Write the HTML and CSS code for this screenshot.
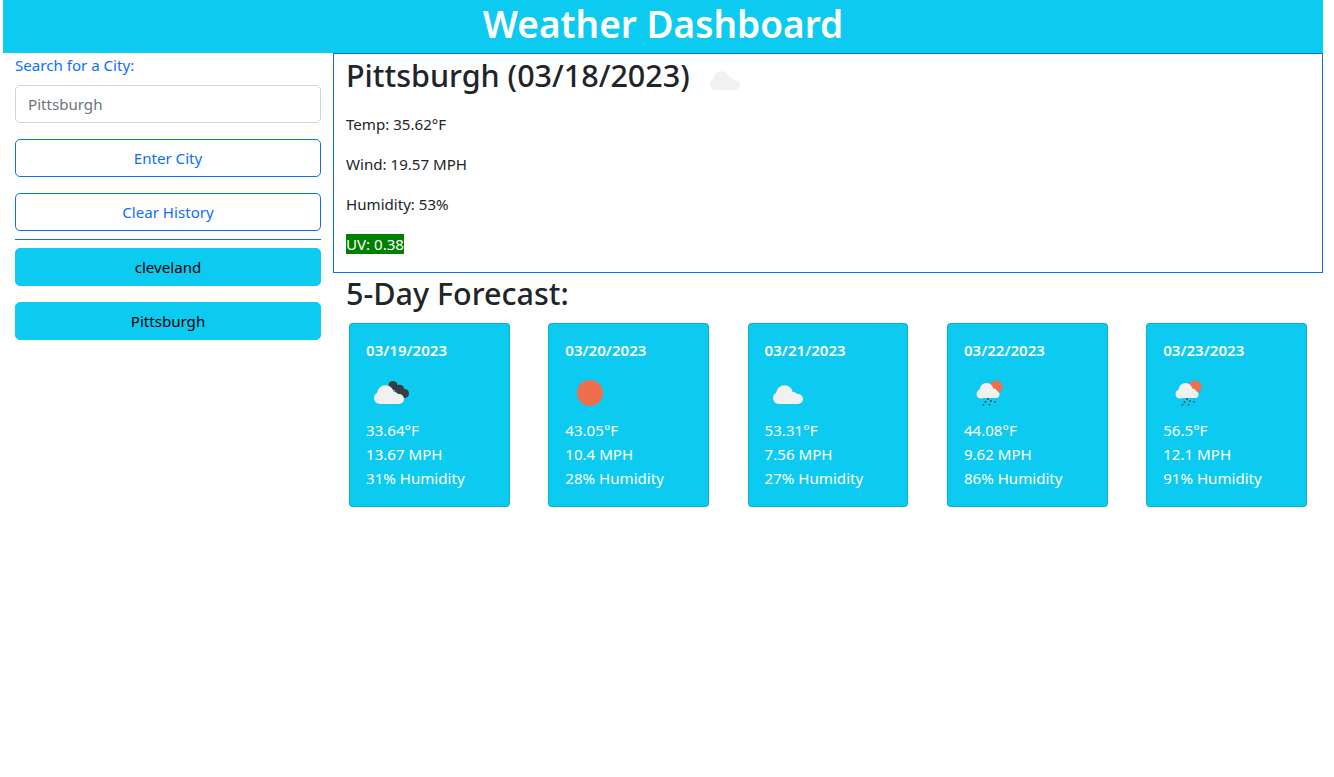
FILE: index.html
```html
<!DOCTYPE html>
<html lang="en">
<head>
  <meta charset="UTF-8">
  <meta name="viewport" content="width=device-width, initial-scale=1.0">
  <title>Weather Dashboard</title>
  <link rel="stylesheet" href="styles.css">
</head>
<body>
  <svg class="icon-defs" width="0" height="0" aria-hidden="true">
    <defs>
      <symbol id="cloud" viewBox="0 0 50 50">
        <circle cx="14" cy="30" r="6"/>
        <circle cx="19.5" cy="25.800" r="8.500"/>
        <circle cx="28" cy="29" r="5"/>
        <circle cx="33" cy="31" r="5"/>
        <rect x="14" y="28" width="19" height="8"/>
      </symbol>
      <symbol id="dark-cloud" viewBox="0 0 50 50">
        <circle cx="27" cy="17.500" r="4.500"/>
        <circle cx="33.500" cy="21.500" r="4.800"/>
        <circle cx="38.500" cy="25.500" r="4.500"/>
      </symbol>
    </defs>
  </svg>

  <div class="container">
    <header class="page-header">
      <h1>Weather Dashboard</h1>
    </header>

    <div class="row">
      <aside class="sidebar">
        <label class="search-label" for="city">Search for a City:</label>
        <input class="search-input" id="city" type="text" placeholder="Pittsburgh">
        <button class="btn btn-outline">Enter City</button>
        <button class="btn btn-outline">Clear History</button>
        <hr class="divider">
        <button class="btn btn-history">cleveland</button>
        <button class="btn btn-history">Pittsburgh</button>
      </aside>

      <main class="content">
        <section class="today">
          <h2 class="today-title">Pittsburgh (03/18/2023) <svg class="wx-icon"><use class="c-light" href="#cloud"/></svg></h2>
          <p>Temp: 35.62°F</p>
          <p>Wind: 19.57 MPH</p>
          <p>Humidity: 53%</p>
          <p><span class="uv-low">UV: 0.38</span></p>
        </section>

        <h2 class="forecast-title">5-Day Forecast:</h2>
        <div class="forecast">
          <div class="card">
            <div class="card-date">03/19/2023</div>
            <svg class="wx-icon" viewBox="0 0 50 50">
              <use class="c-dark" href="#dark-cloud" width="50" height="50"/>
              <use class="c-light" href="#cloud" width="50" height="50"/>
            </svg>
            <div>33.64°F</div>
            <div>13.67 MPH</div>
            <div>31% Humidity</div>
          </div>
          <div class="card">
            <div class="card-date">03/20/2023</div>
            <svg class="wx-icon" viewBox="0 0 50 50">
              <circle class="c-sun" cx="25" cy="25" r="13"/>
            </svg>
            <div>43.05°F</div>
            <div>10.4 MPH</div>
            <div>28% Humidity</div>
          </div>
          <div class="card">
            <div class="card-date">03/21/2023</div>
            <svg class="wx-icon" viewBox="0 0 50 50">
              <use class="c-light" href="#cloud" width="50" height="50"/>
            </svg>
            <div>53.31°F</div>
            <div>7.56 MPH</div>
            <div>27% Humidity</div>
          </div>
          <div class="card">
            <div class="card-date">03/22/2023</div>
            <svg class="wx-icon" viewBox="0 0 50 50">
              <circle class="c-sun" cx="32" cy="19" r="6.500"/>
              <g class="c-light">
                <circle cx="17" cy="26" r="4.500"/>
                <circle cx="22.500" cy="22" r="7"/>
                <circle cx="29.500" cy="24" r="3.500"/>
                <circle cx="32" cy="26.500" r="3.500"/>
                <rect x="17" y="24" width="15" height="6"/>
              </g>
              <path class="c-rain" d="M24 30v2M21.500 33v2M27 32v2M31 33v1.500M19.500 36v1.500M25.500 36v1.500"/>
            </svg>
            <div>44.08°F</div>
            <div>9.62 MPH</div>
            <div>86% Humidity</div>
          </div>
          <div class="card">
            <div class="card-date">03/23/2023</div>
            <svg class="wx-icon" viewBox="0 0 50 50">
              <circle class="c-sun" cx="32" cy="19" r="6.500"/>
              <g class="c-light">
                <circle cx="17" cy="26" r="4.500"/>
                <circle cx="22.500" cy="22" r="7"/>
                <circle cx="29.500" cy="24" r="3.500"/>
                <circle cx="32" cy="26.500" r="3.500"/>
                <rect x="17" y="24" width="15" height="6"/>
              </g>
              <path class="c-rain" d="M24 30v2M21.500 33v2M27 32v2M31 33v1.500M19.500 36v1.500M25.500 36v1.500"/>
            </svg>
            <div>56.5°F</div>
            <div>12.1 MPH</div>
            <div>91% Humidity</div>
          </div>
        </div>
      </main>
    </div>
  </div>
</body>
</html>
```

FILE: styles.css
```css
body {
  font-family: "Noto Sans", Arial, sans-serif;
  font-size: 15.1px;
  line-height: 24px;
  color: #212529;
  background-color: #fff;
  margin: 0;
  padding: 0;
}

.icon-defs {
  position: absolute;
}

.container {
  width: 1320px;
  margin-left: 3px;
}

.page-header {
  background-color: #0dcaf0;
  color: #fff;
  text-align: center;
  height: 53px;
}

.page-header h1 {
  margin: 0;
  font-size: 37px;
  font-weight: 600;
  line-height: 47px;
}

.row {
  display: flex;
}

.sidebar {
  width: 330px;
  box-sizing: border-box;
  padding: 0 12px;
}

.search-label {
  display: block;
  color: #0d6efd;
  margin-bottom: 8px;
}

.search-input {
  display: block;
  width: 100%;
  height: 38px;
  box-sizing: border-box;
  margin-bottom: 16px;
  padding: 6px 12px;
  font: inherit;
  border: 1px solid #ced4da;
  border-radius: 5px;
}

.search-input::placeholder {
  color: #6c757d;
}

.btn {
  display: block;
  width: 100%;
  height: 38px;
  box-sizing: border-box;
  margin-bottom: 16px;
  padding: 6px 12px;
  font: inherit;
  border-radius: 5px;
  cursor: pointer;
}

.btn-outline {
  background-color: #fff;
  color: #0d6efd;
  border: 1px solid #0d6efd;
}

.btn-history {
  background-color: #0dcaf0;
  color: #000;
  border: 1px solid #0dcaf0;
}

.divider {
  border: none;
  border-top: 1px solid #0d6efd;
  margin: -8px 0 8px;
}

.content {
  width: 990px;
}

.today {
  box-sizing: border-box;
  height: 220px;
  border: 1px solid #0d6efd;
  padding: 0 12px;
}

.today-title {
  margin: 0 0 8px;
  height: 50px;
  font-size: 30.5px;
  font-weight: 500;
  line-height: 42px;
  white-space: nowrap;
}

.today p {
  margin: 0 0 16px;
}

.uv-low {
  background-color: green;
  color: #fff;
}

.forecast-title {
  margin: 1px 0 11px 13px;
  font-size: 30.5px;
  font-weight: 500;
  line-height: 38px;
}

.forecast {
  display: flex;
  justify-content: space-between;
  padding: 0 16px;
}

.card {
  width: 160.800px;
  height: 184px;
  box-sizing: border-box;
  padding: 16px;
  background-color: #0dcaf0;
  color: #fff;
  border: 1px solid rgba(0, 0, 0, .125);
  border-radius: 4px;
}

.card-date {
  font-weight: 600;
  line-height: 20px;
  margin-bottom: 8px;
}

.wx-icon {
  display: block;
  width: 50px;
  height: 50px;
}

.today-title .wx-icon {
  display: inline-block;
  vertical-align: middle;
  margin-left: 4px;
}

.c-light {
  fill: #f1f1f1;
}

.c-dark {
  fill: #3c3c3e;
}

.c-sun {
  fill: #ee6e4d;
}

.c-rain {
  fill: none;
  stroke: #3c4650;
  stroke-width: 1.500;
}
```
